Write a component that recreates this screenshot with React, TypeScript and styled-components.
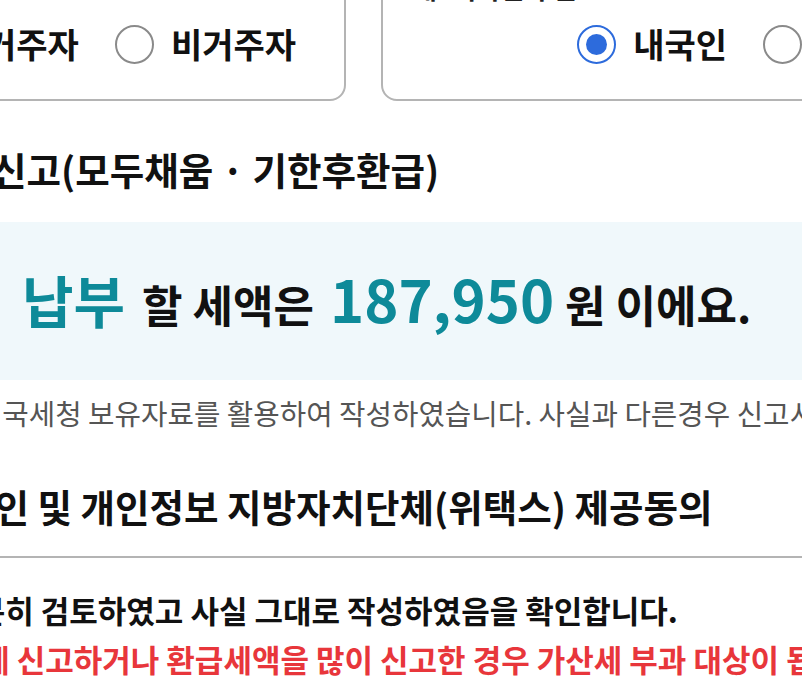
import React from 'react'
import styled, { createGlobalStyle } from 'styled-components'

const GlobalStyle = createGlobalStyle`
  html, body {
    margin: 0;
    padding: 0;
    background: #fff;
  }
  body {
    font-family: "Noto Sans CJK KR", "Noto Sans", sans-serif;
    color: #111;
    overflow: hidden;
  }
`

const Viewport = styled.div`
  width: 802px;
  height: 679px;
  overflow: hidden;
`

const Page = styled.div`
  width: 1200px;
  margin: -55px 0 0 -234px;
`

const CardRow = styled.div`
  display: grid;
  grid-template-columns: 580px 582px;
  column-gap: 35px;
`

const Card = styled.div`
  border: 2px solid #b4b4b4;
  border-radius: 16px;
  padding: 24px 48px 35px 30px;
`

const CardLabel = styled.div`
  font-size: 26px;
  font-weight: 700;
  line-height: 34px;
  color: #222;
`

const RadioGroup = styled.div`
  display: flex;
  justify-content: flex-end;
  align-items: center;
  column-gap: 36px;
  margin-top: 19px;
`

const RadioItem = styled.label`
  display: flex;
  align-items: center;
  column-gap: 17px;
  font-size: 34px;
  font-weight: 700;
  line-height: 40px;
  color: #111;
`

const RadioCircle = styled.span<{ $checked?: boolean }>`
  box-sizing: border-box;
  width: 39px;
  height: 39px;
  border-radius: 50%;
  border: 2px solid ${p => (p.$checked ? '#2d6bdc' : '#8a8a8a')};
  display: flex;
  align-items: center;
  justify-content: center;
  &::after {
    content: '';
    width: 21px;
    height: 21px;
    border-radius: 50%;
    background: #2d6bdc;
    display: ${p => (p.$checked ? 'block' : 'none')};
  }
`

const Heading = styled.h2<{ $indent: number }>`
  margin: 0;
  font-size: 37.5px;
  font-weight: 700;
  line-height: 46px;
  white-space: nowrap;
  text-indent: ${p => p.$indent}px;
`

const FirstHeading = styled(Heading)`
  margin-top: 45px;
`

const ResultBox = styled.div`
  box-sizing: border-box;
  margin-top: 30px;
  height: 158px;
  padding: 0 0 6px 256px;
  background: #f0f8fb;
  display: flex;
  align-items: center;
  white-space: nowrap;
`

const Result = styled.p`
  margin: 0;
  font-size: 44px;
  font-weight: 700;
  color: #111;
`

const Accent = styled.span`
  font-size: 56px;
  color: #0e8a99;
  margin-right: 7px;
`

const Amount = styled(Accent)`
  font-size: 58px;
  margin: 0 1px 0 6px;
`

const Notice = styled.p<{ $indent: number }>`
  margin: 15px 0 0;
  font-size: 28.75px;
  line-height: 36px;
  color: #555;
  white-space: nowrap;
  text-indent: ${p => p.$indent}px;
`

const AgreeHeading = styled(Heading)`
  margin-top: 52px;
`

const Divider = styled.hr`
  margin: 27px 0 0;
  border: 0;
  height: 2px;
  background: #b4b4b4;
`

const Confirm = styled.p<{ $indent: number; $warn?: boolean }>`
  margin: 0;
  font-size: 31px;
  font-weight: 700;
  line-height: 40px;
  white-space: nowrap;
  color: ${p => (p.$warn ? '#e8363b' : '#111')};
  text-indent: ${p => p.$indent}px;
`

const ConfirmBlock = styled.div`
  margin-top: 32px;
  display: flex;
  flex-direction: column;
  row-gap: 9px;
`

export default function App() {
  return (
    <Viewport>
      <GlobalStyle />
      <Page>
        <CardRow>
          <Card>
            <CardLabel>거주 구분</CardLabel>
            <RadioGroup>
              <RadioItem>
                <RadioCircle />
                거주자
              </RadioItem>
              <RadioItem>
                <RadioCircle />
                비거주자
              </RadioItem>
            </RadioGroup>
          </Card>
          <Card>
            <CardLabel>내·외국인 구분</CardLabel>
            <RadioGroup>
              <RadioItem>
                <RadioCircle $checked />
                내국인
              </RadioItem>
              <RadioItem>
                <RadioCircle />
                외국인
              </RadioItem>
            </RadioGroup>
          </Card>
        </CardRow>

        <FirstHeading $indent={-24}>종합소득세 정기신고(모두채움 · 기한후환급)</FirstHeading>

        <ResultBox>
          <Result>
            <Accent>납부</Accent> 할 세액은 <Amount>187,950</Amount> 원 이에요.
          </Result>
        </ResultBox>

        <Notice $indent={56}>※ 위 신고서는 국세청 보유자료를 활용하여 작성하였습니다. 사실과 다른경우 신고서를 수정하여 주시기 바랍니다.</Notice>

        <AgreeHeading $indent={39}>위 신고서 확인 및 개인정보 지방자치단체(위택스) 제공동의</AgreeHeading>
        <Divider />

        <ConfirmBlock>
          <Confirm $indent={54}>위 내용을 충분히 검토하였고 사실 그대로 작성하였음을 확인합니다.</Confirm>
          <Confirm $indent={37} $warn>납부세액을 적게 신고하거나 환급세액을 많이 신고한 경우 가산세 부과 대상이 됩니다.</Confirm>
        </ConfirmBlock>
      </Page>
    </Viewport>
  )
}
